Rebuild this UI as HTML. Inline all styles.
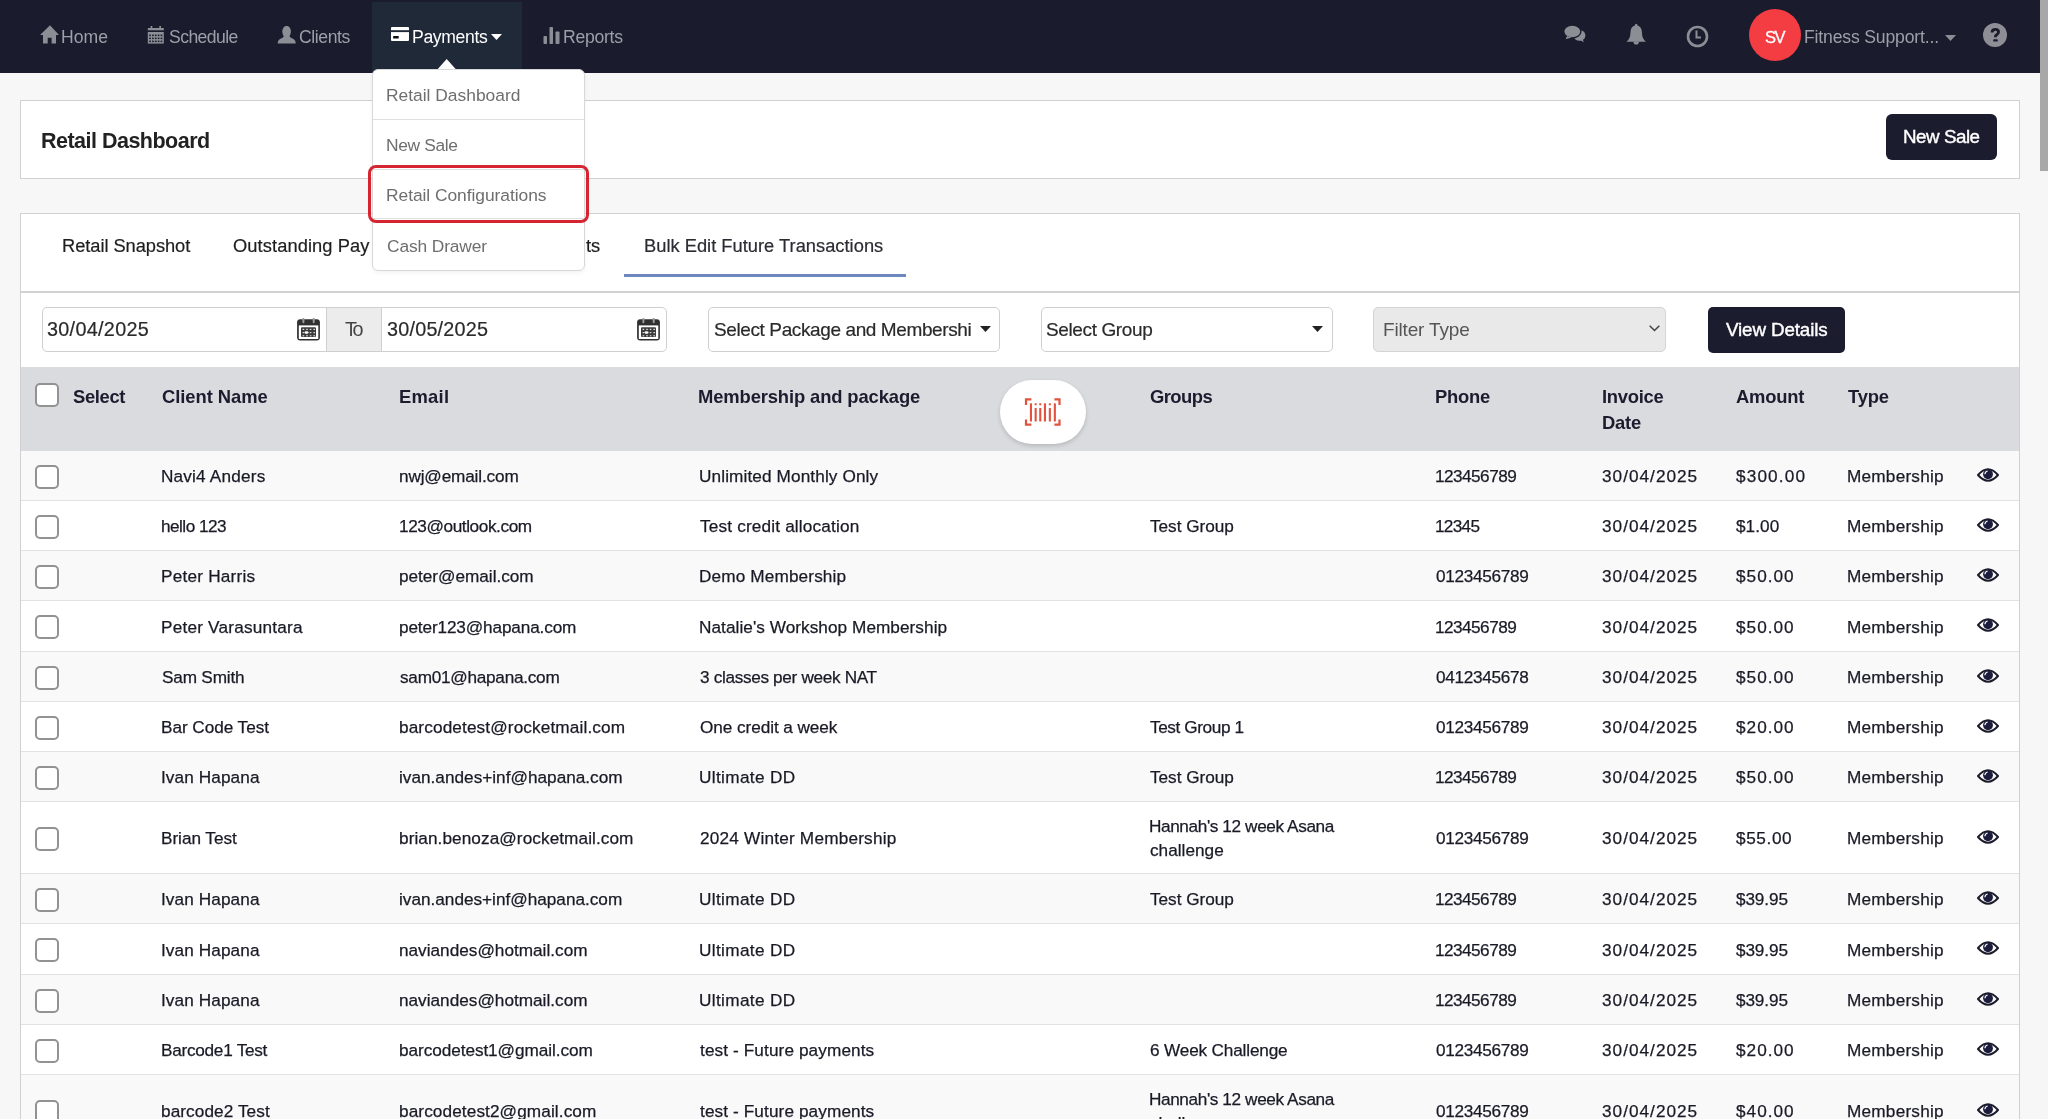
<!DOCTYPE html>
<html><head><meta charset="utf-8"><title>Retail Dashboard</title>
<style>
html,body{margin:0;padding:0;}
body{width:2048px;height:1119px;overflow:hidden;position:relative;background:#f7f7f7;font-family:"Liberation Sans",sans-serif;}
.b{position:absolute;}
.t{position:absolute;white-space:nowrap;line-height:1;will-change:transform;}
</style></head><body>
<div class="b" style="left:0px;top:0px;width:2040px;height:73px;background:#1a1b2c;"></div>
<div class="b" style="left:372px;top:2px;width:150px;height:71px;background:#1f2937;"></div>
<svg class="b" style="left:40px;top:25px" width="20" height="19" viewBox="0 0 20 19"><path d="M10 0.2 L19 9.9 L16 9.9 L16 18.5 L11.6 18.5 L11.6 12.7 L7.7 12.7 L7.7 18.5 L3 18.5 L3 9.9 L0 9.9 Z" fill="#8c8e95"/></svg>
<svg class="b" style="left:147px;top:26px" width="17" height="18" viewBox="0 0 17 18"><rect x="0.8" y="2" width="16" height="2.3" fill="#8c8e95"/><rect x="3.6" y="0" width="1.7" height="2.5" fill="#8c8e95"/><rect x="12.3" y="0" width="1.7" height="2.5" fill="#8c8e95"/><rect x="0.8" y="6" width="16" height="11.6" fill="#8c8e95"/><rect x="2.20" y="8.60" width="1.7" height="1.5" fill="#1a1b2c"/><rect x="5.05" y="8.60" width="1.7" height="1.5" fill="#1a1b2c"/><rect x="7.90" y="8.60" width="1.7" height="1.5" fill="#1a1b2c"/><rect x="10.75" y="8.60" width="1.7" height="1.5" fill="#1a1b2c"/><rect x="13.60" y="8.60" width="1.7" height="1.5" fill="#1a1b2c"/><rect x="2.20" y="11.60" width="1.7" height="1.5" fill="#1a1b2c"/><rect x="5.05" y="11.60" width="1.7" height="1.5" fill="#1a1b2c"/><rect x="7.90" y="11.60" width="1.7" height="1.5" fill="#1a1b2c"/><rect x="10.75" y="11.60" width="1.7" height="1.5" fill="#1a1b2c"/><rect x="13.60" y="11.60" width="1.7" height="1.5" fill="#1a1b2c"/><rect x="2.20" y="14.60" width="1.7" height="1.5" fill="#1a1b2c"/><rect x="5.05" y="14.60" width="1.7" height="1.5" fill="#1a1b2c"/><rect x="7.90" y="14.60" width="1.7" height="1.5" fill="#1a1b2c"/><rect x="10.75" y="14.60" width="1.7" height="1.5" fill="#1a1b2c"/><rect x="13.60" y="14.60" width="1.7" height="1.5" fill="#1a1b2c"/></svg>
<svg class="b" style="left:277px;top:26px" width="20" height="18" viewBox="0 0 20 18"><ellipse cx="9.6" cy="5.6" rx="4.3" ry="5.7" fill="#8c8e95"/><path d="M6.8 9.5 L12.4 9.5 Q12.6 11.2 14 11.7 L16.8 13.2 Q18.8 14.3 18.8 17.6 L0.6 17.6 Q0.6 14.3 2.6 13.2 L5.4 11.7 Q6.8 11.2 6.8 9.5 Z" fill="#8c8e95"/></svg>
<svg class="b" style="left:391px;top:27px" width="18" height="14" viewBox="0 0 18 14"><rect x="0" y="0" width="18" height="14" rx="1" fill="#fff"/><rect x="0" y="3.2" width="18" height="1.9" fill="#1f2937"/><rect x="2.1" y="9" width="5.6" height="2.5" rx="0.5" fill="#0b0f1a"/></svg>
<svg class="b" style="left:543px;top:27px" width="17" height="17" viewBox="0 0 17 17"><rect x="0.5" y="9" width="3.5" height="8" rx="0.8" fill="#8c8e95"/><rect x="6.5" y="0" width="3.5" height="17" rx="0.8" fill="#8c8e95"/><rect x="12.5" y="4.5" width="4" height="12.5" rx="0.8" fill="#8c8e95"/></svg>
<div class="t" style="left:61.00px;top:28.70px;font-size:17.6px;color:#9d9fa9;font-weight:400;letter-spacing:0.051px;">Home</div>
<div class="t" style="left:169.30px;top:28.70px;font-size:17.6px;color:#9d9fa9;font-weight:400;letter-spacing:-0.569px;">Schedule</div>
<div class="t" style="left:299.40px;top:28.70px;font-size:17.6px;color:#9d9fa9;font-weight:400;letter-spacing:-0.397px;">Clients</div>
<div class="t" style="left:412.30px;top:28.70px;font-size:17.6px;color:#ffffff;font-weight:400;letter-spacing:-0.347px;">Payments</div>
<svg class="b" style="left:491px;top:34px" width="11" height="6" viewBox="0 0 11 6"><path d="M0 0 L11 0 L5.5 6 Z" fill="#fff"/></svg>
<div class="t" style="left:562.90px;top:28.70px;font-size:17.6px;color:#9d9fa9;font-weight:400;letter-spacing:-0.268px;">Reports</div>
<svg class="b" style="left:1562px;top:23px" width="26" height="21" viewBox="0 0 26 21"><ellipse cx="17.5" cy="12.4" rx="5.9" ry="5.4" fill="#8c8e95"/><path d="M17 16.5 L21.8 19.3 L20.5 15.5 Z" fill="#8c8e95"/><ellipse cx="10.3" cy="8.5" rx="8.6" ry="6.4" fill="#8c8e95" stroke="#1a1b2c" stroke-width="1.4"/><path d="M5 13 L3.6 16.3 L9.5 14.5 Z" fill="#8c8e95"/></svg>
<svg class="b" style="left:1626px;top:23px" width="21" height="23" viewBox="0 0 21 23"><path d="M10.2 0.8 Q11.5 0.8 11.6 2.4 Q16 3.8 16 10 Q16 15.6 19.9 18.8 L0.5 18.8 Q4.4 15.6 4.4 10 Q4.4 3.8 8.8 2.4 Q8.9 0.8 10.2 0.8 Z" fill="#8c8e95"/><path d="M7.4 18.5 A2.8 3.1 0 0 0 13 18.5 Z" fill="#8c8e95"/></svg>
<svg class="b" style="left:1686px;top:25px" width="23" height="23" viewBox="0 0 23 23"><circle cx="11.5" cy="11.5" r="9.5" fill="none" stroke="#8c8e95" stroke-width="2.6"/><path d="M10.5 5.5 L10.5 12.5 L15 12.5" fill="none" stroke="#8c8e95" stroke-width="2"/></svg>
<div class="b" style="left:1749px;top:9px;width:52px;height:52px;border-radius:50%;background:#f43d42;"></div>
<div class="t" style="left:1764.50px;top:29.43px;font-size:16.5px;color:#ffffff;font-weight:400;letter-spacing:-1.405px;-webkit-text-stroke:0.3px #fff;">SV</div>
<div class="t" style="left:1804.00px;top:28.50px;font-size:17.6px;color:#9d9fa9;font-weight:400;letter-spacing:-0.164px;">Fitness Support...</div>
<svg class="b" style="left:1945px;top:35px" width="11" height="6" viewBox="0 0 11 6"><path d="M0 0 L11 0 L5.5 6 Z" fill="#8c8e95"/></svg>
<svg class="b" style="left:1982.5px;top:23.4px" width="24" height="24" viewBox="0 0 24 24"><circle cx="12" cy="12" r="12" fill="#8e8f96"/><path d="M9.1 9.4 Q9.1 6.4 12.4 6.4 Q15.5 6.4 15.5 9 Q15.5 10.9 13.4 12 Q12.4 12.6 12.4 14.2" fill="none" stroke="#1a1b2c" stroke-width="2.9"/><rect x="10.2" y="16.2" width="4.6" height="2.4" rx="0.9" fill="#1a1b2c"/></svg>
<div class="b" style="left:2040px;top:0px;width:8px;height:1119px;background:#f6f6f6;"></div>
<div class="b" style="left:2040px;top:0px;width:8px;height:171px;background:#a8a8a8;"></div>
<div class="b" style="left:20px;top:100px;width:2000px;height:79px;background:#fff;border:1px solid #d0d0d0;box-sizing:border-box;"></div>
<div class="t" style="left:41.30px;top:130.70px;font-size:21.5px;color:#222222;font-weight:700;letter-spacing:-0.512px;">Retail Dashboard</div>
<div class="b" style="left:1886px;top:114px;width:111px;height:46px;background:#1b1c2e;border-radius:6px;"></div>
<div class="t" style="left:1902.70px;top:128.19px;font-size:18.8px;color:#ffffff;font-weight:400;letter-spacing:-0.476px;-webkit-text-stroke:0.4px #fff;">New Sale</div>
<div class="b" style="left:20px;top:213px;width:2000px;height:987px;background:#fff;border:1px solid #d0d0d0;box-sizing:border-box;"></div>
<div class="t" style="left:61.50px;top:236.51px;font-size:18.3px;color:#1e1e1e;font-weight:400;letter-spacing:-0.056px;-webkit-text-stroke:0.2px currentColor;">Retail Snapshot</div>
<div class="t" style="left:233.40px;top:236.51px;font-size:18.3px;color:#1e1e1e;font-weight:400;letter-spacing:0.091px;-webkit-text-stroke:0.2px currentColor;">Outstanding Pay</div>
<div class="t" style="left:464.00px;top:236.51px;font-size:18.3px;color:#1e1e1e;font-weight:400;-webkit-text-stroke:0.2px currentColor;">Failed Payments</div>
<div class="t" style="left:643.80px;top:236.51px;font-size:18.3px;color:#2b2b33;font-weight:400;letter-spacing:0.015px;-webkit-text-stroke:0.2px currentColor;">Bulk Edit Future Transactions</div>
<div class="b" style="left:624px;top:274px;width:282px;height:3px;background:#6c88bd;"></div>
<div class="b" style="left:21px;top:291px;width:1998px;height:2px;background:#d2d2d2;"></div>
<div class="b" style="left:42px;top:307px;width:285px;height:45px;background:#fff;border:1px solid #cfcfcf;border-radius:5px 0 0 5px;box-sizing:border-box;"></div>
<div class="b" style="left:326px;top:307px;width:56px;height:45px;background:#ececec;border:1px solid #cfcfcf;box-sizing:border-box;"></div>
<div class="b" style="left:381px;top:307px;width:286px;height:45px;background:#fff;border:1px solid #cfcfcf;border-radius:0 5px 5px 0;box-sizing:border-box;"></div>
<div class="t" style="left:47.40px;top:319.74px;font-size:19.8px;color:#2a2a2a;font-weight:400;letter-spacing:0.311px;-webkit-text-stroke:0.2px currentColor;">30/04/2025</div>
<div class="t" style="left:345.00px;top:319.74px;font-size:19.8px;color:#444;font-weight:400;letter-spacing:-2.490px;">To</div>
<div class="t" style="left:387.40px;top:319.74px;font-size:19.8px;color:#2a2a2a;font-weight:400;letter-spacing:0.222px;-webkit-text-stroke:0.2px currentColor;">30/05/2025</div>
<svg class="b" style="left:297px;top:318px" width="24" height="24" viewBox="0 0 24 24"><rect x="0.1" y="1.3" width="22.8" height="21.3" rx="3" fill="#303030"/><rect x="1.8" y="7.4" width="19.5" height="13.6" fill="#fff"/><rect x="4" y="9.2" width="15" height="9.8" rx="1" fill="#3c3c3c"/><rect x="5.4" y="-0.1" width="2" height="5.3" rx="1" fill="#9a9a9a"/><rect x="15.7" y="-0.1" width="2" height="5.3" rx="1" fill="#9a9a9a"/><rect x="5.6" y="10.8" width="1.6" height="1.2" fill="#d8d8d8"/><rect x="9.2" y="10.8" width="1.6" height="1.2" fill="#d8d8d8"/><rect x="12.8" y="10.8" width="1.6" height="1.2" fill="#d8d8d8"/><rect x="16.4" y="10.8" width="1.6" height="1.2" fill="#d8d8d8"/><rect x="5.6" y="14.0" width="1.6" height="1.2" fill="#d8d8d8"/><rect x="9.2" y="14.0" width="1.6" height="1.2" fill="#d8d8d8"/><rect x="12.8" y="14.0" width="1.6" height="1.2" fill="#d8d8d8"/><rect x="16.4" y="14.0" width="1.6" height="1.2" fill="#d8d8d8"/><rect x="5.6" y="17.2" width="1.6" height="1.2" fill="#d8d8d8"/><rect x="9.2" y="17.2" width="1.6" height="1.2" fill="#d8d8d8"/><rect x="12.8" y="17.2" width="1.6" height="1.2" fill="#d8d8d8"/><rect x="16.4" y="17.2" width="1.6" height="1.2" fill="#d8d8d8"/><ellipse cx="9.5" cy="14.5" rx="2" ry="1.2" fill="#fff"/></svg>
<svg class="b" style="left:637px;top:318px" width="24" height="24" viewBox="0 0 24 24"><rect x="0.1" y="1.3" width="22.8" height="21.3" rx="3" fill="#303030"/><rect x="1.8" y="7.4" width="19.5" height="13.6" fill="#fff"/><rect x="4" y="9.2" width="15" height="9.8" rx="1" fill="#3c3c3c"/><rect x="5.4" y="-0.1" width="2" height="5.3" rx="1" fill="#9a9a9a"/><rect x="15.7" y="-0.1" width="2" height="5.3" rx="1" fill="#9a9a9a"/><rect x="5.6" y="10.8" width="1.6" height="1.2" fill="#d8d8d8"/><rect x="9.2" y="10.8" width="1.6" height="1.2" fill="#d8d8d8"/><rect x="12.8" y="10.8" width="1.6" height="1.2" fill="#d8d8d8"/><rect x="16.4" y="10.8" width="1.6" height="1.2" fill="#d8d8d8"/><rect x="5.6" y="14.0" width="1.6" height="1.2" fill="#d8d8d8"/><rect x="9.2" y="14.0" width="1.6" height="1.2" fill="#d8d8d8"/><rect x="12.8" y="14.0" width="1.6" height="1.2" fill="#d8d8d8"/><rect x="16.4" y="14.0" width="1.6" height="1.2" fill="#d8d8d8"/><rect x="5.6" y="17.2" width="1.6" height="1.2" fill="#d8d8d8"/><rect x="9.2" y="17.2" width="1.6" height="1.2" fill="#d8d8d8"/><rect x="12.8" y="17.2" width="1.6" height="1.2" fill="#d8d8d8"/><rect x="16.4" y="17.2" width="1.6" height="1.2" fill="#d8d8d8"/><ellipse cx="9.5" cy="14.5" rx="2" ry="1.2" fill="#fff"/></svg>
<div class="b" style="left:708px;top:307px;width:292px;height:45px;background:#fff;border:1px solid #cfcfcf;border-radius:5px;box-sizing:border-box;"></div>
<div class="t" style="left:713.50px;top:320.12px;font-size:19px;color:#2a2a2a;font-weight:400;letter-spacing:-0.390px;-webkit-text-stroke:0.2px currentColor;">Select Package and Membershi</div>
<svg class="b" style="left:980px;top:326px" width="11" height="6" viewBox="0 0 11 6"><path d="M0 0 L11 0 L5.5 6 Z" fill="#222"/></svg>
<div class="b" style="left:1041px;top:307px;width:292px;height:45px;background:#fff;border:1px solid #cfcfcf;border-radius:5px;box-sizing:border-box;"></div>
<div class="t" style="left:1045.80px;top:320.12px;font-size:19px;color:#2a2a2a;font-weight:400;letter-spacing:-0.375px;-webkit-text-stroke:0.2px currentColor;">Select Group</div>
<svg class="b" style="left:1312px;top:326px" width="11" height="6" viewBox="0 0 11 6"><path d="M0 0 L11 0 L5.5 6 Z" fill="#222"/></svg>
<div class="b" style="left:1373px;top:307px;width:293px;height:45px;background:#e9e9e9;border:1px solid #d4d4d4;border-radius:5px;box-sizing:border-box;"></div>
<div class="t" style="left:1383.40px;top:320.32px;font-size:19px;color:#555;font-weight:400;letter-spacing:-0.162px;">Filter Type</div>
<svg class="b" style="left:1649px;top:325px" width="11" height="7" viewBox="0 0 11 7"><path d="M0.7 0.7 L5.5 5.5 L10.3 0.7" fill="none" stroke="#444" stroke-width="1.5"/></svg>
<div class="b" style="left:1708px;top:307px;width:137px;height:46px;background:#1b1c2e;border-radius:5px;"></div>
<div class="t" style="left:1725.50px;top:321.09px;font-size:18.8px;color:#fff;font-weight:400;letter-spacing:-0.118px;-webkit-text-stroke:0.4px #fff;">View Details</div>
<div class="b" style="left:21px;top:367px;width:1998px;height:84px;background:#dadbdf;"></div>
<div class="b" style="left:35px;top:383px;width:24px;height:24px;border:2.5px solid #929292;border-radius:5px;box-sizing:border-box;background:#fff;"></div>
<div class="t" style="left:72.70px;top:388.12px;font-size:18.4px;color:#1b1c2e;font-weight:700;letter-spacing:-0.352px;">Select</div>
<div class="t" style="left:162.10px;top:388.12px;font-size:18.4px;color:#1b1c2e;font-weight:700;letter-spacing:-0.046px;">Client Name</div>
<div class="t" style="left:398.50px;top:388.12px;font-size:18.4px;color:#1b1c2e;font-weight:700;letter-spacing:0.236px;">Email</div>
<div class="t" style="left:698.10px;top:388.12px;font-size:18.4px;color:#1b1c2e;font-weight:700;letter-spacing:-0.125px;">Membership and package</div>
<div class="t" style="left:1150.30px;top:388.12px;font-size:18.4px;color:#1b1c2e;font-weight:700;letter-spacing:-0.553px;">Groups</div>
<div class="t" style="left:1435.00px;top:388.12px;font-size:18.4px;color:#1b1c2e;font-weight:700;letter-spacing:-0.267px;">Phone</div>
<div class="t" style="left:1601.50px;top:388.12px;font-size:18.4px;color:#1b1c2e;font-weight:700;letter-spacing:-0.290px;">Invoice</div>
<div class="t" style="left:1735.90px;top:388.12px;font-size:18.4px;color:#1b1c2e;font-weight:700;letter-spacing:-0.207px;">Amount</div>
<div class="t" style="left:1847.80px;top:388.12px;font-size:18.4px;color:#1b1c2e;font-weight:700;letter-spacing:-0.177px;">Type</div>
<div class="t" style="left:1601.50px;top:414.42px;font-size:18.4px;color:#1b1c2e;font-weight:700;letter-spacing:-0.200px;">Date</div>
<div class="b" style="left:1000px;top:380px;width:86px;height:64px;border-radius:32px;background:#fff;box-shadow:0 2px 4px rgba(0,0,0,0.16);"></div>
<svg class="b" style="left:1024px;top:398px" width="38" height="29" viewBox="0 0 38 29"><g fill="none" stroke="#e3523d" stroke-width="2.2"><path d="M7.4 1.3 L2 1.3 L2 7"/><path d="M30.4 1.3 L35.5 1.3 L35.5 7"/><path d="M2 21.5 L2 26.7 L7.4 26.7"/><path d="M35.5 21.5 L35.5 26.7 L30.4 26.7"/></g><g fill="#e3523d"><rect x="5.9" y="5.3" width="2.1" height="18.1" rx="0.5"/><rect x="10.6" y="5.3" width="2.1" height="2" rx="0.5"/><rect x="10.6" y="9.9" width="2.1" height="13.5" rx="0.5"/><rect x="15.2" y="5.3" width="2.1" height="2" rx="0.5"/><rect x="15.2" y="9.9" width="2.1" height="13.5" rx="0.5"/><rect x="19.9" y="5.3" width="2.1" height="18.1" rx="0.5"/><rect x="24.8" y="5.3" width="2.1" height="2" rx="0.5"/><rect x="24.8" y="9.9" width="2.1" height="13.5" rx="0.5"/><rect x="29.8" y="5.3" width="2.1" height="18.1" rx="0.5"/></g></svg>
<div class="b" style="left:21px;top:451px;width:1998px;height:49px;background:#f9f9f9;"></div>
<div class="b" style="left:21px;top:500px;width:1998px;height:1px;background:#e2e2e2;"></div>
<div class="b" style="left:35px;top:465px;width:24px;height:24px;border:2.5px solid #929292;border-radius:5px;box-sizing:border-box;background:#fff;"></div>
<div class="t" style="left:161.30px;top:468.14px;font-size:17.2px;color:#191a26;font-weight:400;letter-spacing:0.183px;-webkit-text-stroke:0.25px #191a26;">Navi4 Anders</div>
<div class="t" style="left:398.90px;top:468.14px;font-size:17.2px;color:#191a26;font-weight:400;letter-spacing:-0.153px;-webkit-text-stroke:0.25px #191a26;">nwj@email.com</div>
<div class="t" style="left:698.60px;top:468.14px;font-size:17.2px;color:#191a26;font-weight:400;letter-spacing:0.114px;-webkit-text-stroke:0.25px #191a26;">Unlimited Monthly Only</div>
<div class="t" style="left:1435.10px;top:468.14px;font-size:17.2px;color:#191a26;font-weight:400;letter-spacing:-0.534px;-webkit-text-stroke:0.25px #191a26;">123456789</div>
<div class="t" style="left:1602.20px;top:468.14px;font-size:17.2px;color:#191a26;font-weight:400;letter-spacing:1.015px;-webkit-text-stroke:0.25px #191a26;">30/04/2025</div>
<div class="t" style="left:1736.10px;top:468.14px;font-size:17.2px;color:#191a26;font-weight:400;letter-spacing:1.138px;-webkit-text-stroke:0.25px #191a26;">$300.00</div>
<div class="t" style="left:1846.80px;top:468.14px;font-size:17.2px;color:#191a26;font-weight:400;letter-spacing:0.222px;-webkit-text-stroke:0.25px #191a26;">Membership</div>
<svg class="b" style="left:1977px;top:467.9px" width="22" height="14" viewBox="0 0 22 14"><path d="M1 7 Q11 -4.6 21 7 Q11 18.6 1 7 Z" fill="none" stroke="#1b1b2b" stroke-width="2"/><circle cx="11" cy="6.3" r="4.9" fill="#1b1b3b"/><path d="M7.9 6.3 Q8.1 3.5 10.6 3" fill="none" stroke="#fff" stroke-width="1.1"/></svg>
<div class="b" style="left:21px;top:501px;width:1998px;height:49px;background:#ffffff;"></div>
<div class="b" style="left:21px;top:550px;width:1998px;height:1px;background:#e2e2e2;"></div>
<div class="b" style="left:35px;top:515px;width:24px;height:24px;border:2.5px solid #929292;border-radius:5px;box-sizing:border-box;background:#fff;"></div>
<div class="t" style="left:161.30px;top:518.14px;font-size:17.2px;color:#191a26;font-weight:400;letter-spacing:-0.526px;-webkit-text-stroke:0.25px #191a26;">hello 123</div>
<div class="t" style="left:398.90px;top:518.14px;font-size:17.2px;color:#191a26;font-weight:400;letter-spacing:-0.405px;-webkit-text-stroke:0.25px #191a26;">123@outlook.com</div>
<div class="t" style="left:699.60px;top:518.14px;font-size:17.2px;color:#191a26;font-weight:400;letter-spacing:0.169px;-webkit-text-stroke:0.25px #191a26;">Test credit allocation</div>
<div class="t" style="left:1435.10px;top:518.14px;font-size:17.2px;color:#191a26;font-weight:400;letter-spacing:-0.709px;-webkit-text-stroke:0.25px #191a26;">12345</div>
<div class="t" style="left:1602.20px;top:518.14px;font-size:17.2px;color:#191a26;font-weight:400;letter-spacing:1.015px;-webkit-text-stroke:0.25px #191a26;">30/04/2025</div>
<div class="t" style="left:1736.10px;top:518.14px;font-size:17.2px;color:#191a26;font-weight:400;letter-spacing:0.062px;-webkit-text-stroke:0.25px #191a26;">$1.00</div>
<div class="t" style="left:1846.80px;top:518.14px;font-size:17.2px;color:#191a26;font-weight:400;letter-spacing:0.222px;-webkit-text-stroke:0.25px #191a26;">Membership</div>
<div class="t" style="left:1150.40px;top:518.14px;font-size:17.2px;color:#191a26;font-weight:400;letter-spacing:-0.023px;-webkit-text-stroke:0.25px #191a26;">Test Group</div>
<svg class="b" style="left:1977px;top:517.9px" width="22" height="14" viewBox="0 0 22 14"><path d="M1 7 Q11 -4.6 21 7 Q11 18.6 1 7 Z" fill="none" stroke="#1b1b2b" stroke-width="2"/><circle cx="11" cy="6.3" r="4.9" fill="#1b1b3b"/><path d="M7.9 6.3 Q8.1 3.5 10.6 3" fill="none" stroke="#fff" stroke-width="1.1"/></svg>
<div class="b" style="left:21px;top:551px;width:1998px;height:49px;background:#f9f9f9;"></div>
<div class="b" style="left:21px;top:600px;width:1998px;height:1px;background:#e2e2e2;"></div>
<div class="b" style="left:35px;top:565px;width:24px;height:24px;border:2.5px solid #929292;border-radius:5px;box-sizing:border-box;background:#fff;"></div>
<div class="t" style="left:161.30px;top:568.14px;font-size:17.2px;color:#191a26;font-weight:400;letter-spacing:0.219px;-webkit-text-stroke:0.25px #191a26;">Peter Harris</div>
<div class="t" style="left:398.90px;top:568.14px;font-size:17.2px;color:#191a26;font-weight:400;letter-spacing:-0.023px;-webkit-text-stroke:0.25px #191a26;">peter@email.com</div>
<div class="t" style="left:698.60px;top:568.14px;font-size:17.2px;color:#191a26;font-weight:400;letter-spacing:0.134px;-webkit-text-stroke:0.25px #191a26;">Demo Membership</div>
<div class="t" style="left:1436.10px;top:568.14px;font-size:17.2px;color:#191a26;font-weight:400;letter-spacing:-0.314px;-webkit-text-stroke:0.25px #191a26;">0123456789</div>
<div class="t" style="left:1602.20px;top:568.14px;font-size:17.2px;color:#191a26;font-weight:400;letter-spacing:1.015px;-webkit-text-stroke:0.25px #191a26;">30/04/2025</div>
<div class="t" style="left:1736.10px;top:568.14px;font-size:17.2px;color:#191a26;font-weight:400;letter-spacing:1.018px;-webkit-text-stroke:0.25px #191a26;">$50.00</div>
<div class="t" style="left:1846.80px;top:568.14px;font-size:17.2px;color:#191a26;font-weight:400;letter-spacing:0.222px;-webkit-text-stroke:0.25px #191a26;">Membership</div>
<svg class="b" style="left:1977px;top:567.9px" width="22" height="14" viewBox="0 0 22 14"><path d="M1 7 Q11 -4.6 21 7 Q11 18.6 1 7 Z" fill="none" stroke="#1b1b2b" stroke-width="2"/><circle cx="11" cy="6.3" r="4.9" fill="#1b1b3b"/><path d="M7.9 6.3 Q8.1 3.5 10.6 3" fill="none" stroke="#fff" stroke-width="1.1"/></svg>
<div class="b" style="left:21px;top:601px;width:1998px;height:50px;background:#ffffff;"></div>
<div class="b" style="left:21px;top:651px;width:1998px;height:1px;background:#e2e2e2;"></div>
<div class="b" style="left:35px;top:615px;width:24px;height:24px;border:2.5px solid #929292;border-radius:5px;box-sizing:border-box;background:#fff;"></div>
<div class="t" style="left:161.30px;top:618.64px;font-size:17.2px;color:#191a26;font-weight:400;letter-spacing:0.209px;-webkit-text-stroke:0.25px #191a26;">Peter Varasuntara</div>
<div class="t" style="left:398.90px;top:618.64px;font-size:17.2px;color:#191a26;font-weight:400;letter-spacing:-0.138px;-webkit-text-stroke:0.25px #191a26;">peter123@hapana.com</div>
<div class="t" style="left:698.60px;top:618.64px;font-size:17.2px;color:#191a26;font-weight:400;letter-spacing:0.054px;-webkit-text-stroke:0.25px #191a26;">Natalie's Workshop Membership</div>
<div class="t" style="left:1435.10px;top:618.64px;font-size:17.2px;color:#191a26;font-weight:400;letter-spacing:-0.534px;-webkit-text-stroke:0.25px #191a26;">123456789</div>
<div class="t" style="left:1602.20px;top:618.64px;font-size:17.2px;color:#191a26;font-weight:400;letter-spacing:1.015px;-webkit-text-stroke:0.25px #191a26;">30/04/2025</div>
<div class="t" style="left:1736.10px;top:618.64px;font-size:17.2px;color:#191a26;font-weight:400;letter-spacing:1.018px;-webkit-text-stroke:0.25px #191a26;">$50.00</div>
<div class="t" style="left:1846.80px;top:618.64px;font-size:17.2px;color:#191a26;font-weight:400;letter-spacing:0.222px;-webkit-text-stroke:0.25px #191a26;">Membership</div>
<svg class="b" style="left:1977px;top:618.4px" width="22" height="14" viewBox="0 0 22 14"><path d="M1 7 Q11 -4.6 21 7 Q11 18.6 1 7 Z" fill="none" stroke="#1b1b2b" stroke-width="2"/><circle cx="11" cy="6.3" r="4.9" fill="#1b1b3b"/><path d="M7.9 6.3 Q8.1 3.5 10.6 3" fill="none" stroke="#fff" stroke-width="1.1"/></svg>
<div class="b" style="left:21px;top:652px;width:1998px;height:49px;background:#f9f9f9;"></div>
<div class="b" style="left:21px;top:701px;width:1998px;height:1px;background:#e2e2e2;"></div>
<div class="b" style="left:35px;top:666px;width:24px;height:24px;border:2.5px solid #929292;border-radius:5px;box-sizing:border-box;background:#fff;"></div>
<div class="t" style="left:162.30px;top:669.14px;font-size:17.2px;color:#191a26;font-weight:400;letter-spacing:-0.186px;-webkit-text-stroke:0.25px #191a26;">Sam Smith</div>
<div class="t" style="left:399.90px;top:669.14px;font-size:17.2px;color:#191a26;font-weight:400;letter-spacing:-0.261px;-webkit-text-stroke:0.25px #191a26;">sam01@hapana.com</div>
<div class="t" style="left:699.60px;top:669.14px;font-size:17.2px;color:#191a26;font-weight:400;letter-spacing:-0.330px;-webkit-text-stroke:0.25px #191a26;">3 classes per week NAT</div>
<div class="t" style="left:1436.10px;top:669.14px;font-size:17.2px;color:#191a26;font-weight:400;letter-spacing:-0.314px;-webkit-text-stroke:0.25px #191a26;">0412345678</div>
<div class="t" style="left:1602.20px;top:669.14px;font-size:17.2px;color:#191a26;font-weight:400;letter-spacing:1.015px;-webkit-text-stroke:0.25px #191a26;">30/04/2025</div>
<div class="t" style="left:1736.10px;top:669.14px;font-size:17.2px;color:#191a26;font-weight:400;letter-spacing:1.018px;-webkit-text-stroke:0.25px #191a26;">$50.00</div>
<div class="t" style="left:1846.80px;top:669.14px;font-size:17.2px;color:#191a26;font-weight:400;letter-spacing:0.222px;-webkit-text-stroke:0.25px #191a26;">Membership</div>
<svg class="b" style="left:1977px;top:668.9px" width="22" height="14" viewBox="0 0 22 14"><path d="M1 7 Q11 -4.6 21 7 Q11 18.6 1 7 Z" fill="none" stroke="#1b1b2b" stroke-width="2"/><circle cx="11" cy="6.3" r="4.9" fill="#1b1b3b"/><path d="M7.9 6.3 Q8.1 3.5 10.6 3" fill="none" stroke="#fff" stroke-width="1.1"/></svg>
<div class="b" style="left:21px;top:702px;width:1998px;height:49px;background:#ffffff;"></div>
<div class="b" style="left:21px;top:751px;width:1998px;height:1px;background:#e2e2e2;"></div>
<div class="b" style="left:35px;top:716px;width:24px;height:24px;border:2.5px solid #929292;border-radius:5px;box-sizing:border-box;background:#fff;"></div>
<div class="t" style="left:161.30px;top:719.14px;font-size:17.2px;color:#191a26;font-weight:400;letter-spacing:-0.053px;-webkit-text-stroke:0.25px #191a26;">Bar Code Test</div>
<div class="t" style="left:398.90px;top:719.14px;font-size:17.2px;color:#191a26;font-weight:400;letter-spacing:0.128px;-webkit-text-stroke:0.25px #191a26;">barcodetest@rocketmail.com</div>
<div class="t" style="left:699.60px;top:719.14px;font-size:17.2px;color:#191a26;font-weight:400;letter-spacing:-0.071px;-webkit-text-stroke:0.25px #191a26;">One credit a week</div>
<div class="t" style="left:1436.10px;top:719.14px;font-size:17.2px;color:#191a26;font-weight:400;letter-spacing:-0.314px;-webkit-text-stroke:0.25px #191a26;">0123456789</div>
<div class="t" style="left:1602.20px;top:719.14px;font-size:17.2px;color:#191a26;font-weight:400;letter-spacing:1.015px;-webkit-text-stroke:0.25px #191a26;">30/04/2025</div>
<div class="t" style="left:1736.10px;top:719.14px;font-size:17.2px;color:#191a26;font-weight:400;letter-spacing:1.018px;-webkit-text-stroke:0.25px #191a26;">$20.00</div>
<div class="t" style="left:1846.80px;top:719.14px;font-size:17.2px;color:#191a26;font-weight:400;letter-spacing:0.222px;-webkit-text-stroke:0.25px #191a26;">Membership</div>
<div class="t" style="left:1150.40px;top:719.14px;font-size:17.2px;color:#191a26;font-weight:400;letter-spacing:-0.395px;-webkit-text-stroke:0.25px #191a26;">Test Group 1</div>
<svg class="b" style="left:1977px;top:718.9px" width="22" height="14" viewBox="0 0 22 14"><path d="M1 7 Q11 -4.6 21 7 Q11 18.6 1 7 Z" fill="none" stroke="#1b1b2b" stroke-width="2"/><circle cx="11" cy="6.3" r="4.9" fill="#1b1b3b"/><path d="M7.9 6.3 Q8.1 3.5 10.6 3" fill="none" stroke="#fff" stroke-width="1.1"/></svg>
<div class="b" style="left:21px;top:752px;width:1998px;height:49px;background:#f9f9f9;"></div>
<div class="b" style="left:21px;top:801px;width:1998px;height:1px;background:#e2e2e2;"></div>
<div class="b" style="left:35px;top:766px;width:24px;height:24px;border:2.5px solid #929292;border-radius:5px;box-sizing:border-box;background:#fff;"></div>
<div class="t" style="left:161.30px;top:769.14px;font-size:17.2px;color:#191a26;font-weight:400;letter-spacing:0.099px;-webkit-text-stroke:0.25px #191a26;">Ivan Hapana</div>
<div class="t" style="left:398.90px;top:769.14px;font-size:17.2px;color:#191a26;font-weight:400;letter-spacing:0.010px;-webkit-text-stroke:0.25px #191a26;">ivan.andes+inf@hapana.com</div>
<div class="t" style="left:698.60px;top:769.14px;font-size:17.2px;color:#191a26;font-weight:400;letter-spacing:0.348px;-webkit-text-stroke:0.25px #191a26;">Ultimate DD</div>
<div class="t" style="left:1435.10px;top:769.14px;font-size:17.2px;color:#191a26;font-weight:400;letter-spacing:-0.534px;-webkit-text-stroke:0.25px #191a26;">123456789</div>
<div class="t" style="left:1602.20px;top:769.14px;font-size:17.2px;color:#191a26;font-weight:400;letter-spacing:1.015px;-webkit-text-stroke:0.25px #191a26;">30/04/2025</div>
<div class="t" style="left:1736.10px;top:769.14px;font-size:17.2px;color:#191a26;font-weight:400;letter-spacing:1.018px;-webkit-text-stroke:0.25px #191a26;">$50.00</div>
<div class="t" style="left:1846.80px;top:769.14px;font-size:17.2px;color:#191a26;font-weight:400;letter-spacing:0.222px;-webkit-text-stroke:0.25px #191a26;">Membership</div>
<div class="t" style="left:1150.40px;top:769.14px;font-size:17.2px;color:#191a26;font-weight:400;letter-spacing:-0.023px;-webkit-text-stroke:0.25px #191a26;">Test Group</div>
<svg class="b" style="left:1977px;top:768.9px" width="22" height="14" viewBox="0 0 22 14"><path d="M1 7 Q11 -4.6 21 7 Q11 18.6 1 7 Z" fill="none" stroke="#1b1b2b" stroke-width="2"/><circle cx="11" cy="6.3" r="4.9" fill="#1b1b3b"/><path d="M7.9 6.3 Q8.1 3.5 10.6 3" fill="none" stroke="#fff" stroke-width="1.1"/></svg>
<div class="b" style="left:21px;top:802px;width:1998px;height:71px;background:#ffffff;"></div>
<div class="b" style="left:21px;top:873px;width:1998px;height:1px;background:#e2e2e2;"></div>
<div class="b" style="left:35px;top:827px;width:24px;height:24px;border:2.5px solid #929292;border-radius:5px;box-sizing:border-box;background:#fff;"></div>
<div class="t" style="left:161.30px;top:830.14px;font-size:17.2px;color:#191a26;font-weight:400;letter-spacing:-0.038px;-webkit-text-stroke:0.25px #191a26;">Brian Test</div>
<div class="t" style="left:398.90px;top:830.14px;font-size:17.2px;color:#191a26;font-weight:400;letter-spacing:0.078px;-webkit-text-stroke:0.25px #191a26;">brian.benoza@rocketmail.com</div>
<div class="t" style="left:699.60px;top:830.14px;font-size:17.2px;color:#191a26;font-weight:400;letter-spacing:0.202px;-webkit-text-stroke:0.25px #191a26;">2024 Winter Membership</div>
<div class="t" style="left:1436.10px;top:830.14px;font-size:17.2px;color:#191a26;font-weight:400;letter-spacing:-0.314px;-webkit-text-stroke:0.25px #191a26;">0123456789</div>
<div class="t" style="left:1602.20px;top:830.14px;font-size:17.2px;color:#191a26;font-weight:400;letter-spacing:1.015px;-webkit-text-stroke:0.25px #191a26;">30/04/2025</div>
<div class="t" style="left:1736.10px;top:830.14px;font-size:17.2px;color:#191a26;font-weight:400;letter-spacing:0.618px;-webkit-text-stroke:0.25px #191a26;">$55.00</div>
<div class="t" style="left:1846.80px;top:830.14px;font-size:17.2px;color:#191a26;font-weight:400;letter-spacing:0.222px;-webkit-text-stroke:0.25px #191a26;">Membership</div>
<div class="t" style="left:1149.40px;top:817.94px;font-size:17.2px;color:#191a26;font-weight:400;letter-spacing:-0.387px;-webkit-text-stroke:0.25px #191a26;">Hannah's 12 week Asana</div>
<div class="t" style="left:1150.40px;top:842.44px;font-size:17.2px;color:#191a26;font-weight:400;letter-spacing:0.022px;-webkit-text-stroke:0.25px #191a26;">challenge</div>
<svg class="b" style="left:1977px;top:829.9px" width="22" height="14" viewBox="0 0 22 14"><path d="M1 7 Q11 -4.6 21 7 Q11 18.6 1 7 Z" fill="none" stroke="#1b1b2b" stroke-width="2"/><circle cx="11" cy="6.3" r="4.9" fill="#1b1b3b"/><path d="M7.9 6.3 Q8.1 3.5 10.6 3" fill="none" stroke="#fff" stroke-width="1.1"/></svg>
<div class="b" style="left:21px;top:874px;width:1998px;height:49px;background:#f9f9f9;"></div>
<div class="b" style="left:21px;top:923px;width:1998px;height:1px;background:#e2e2e2;"></div>
<div class="b" style="left:35px;top:888px;width:24px;height:24px;border:2.5px solid #929292;border-radius:5px;box-sizing:border-box;background:#fff;"></div>
<div class="t" style="left:161.30px;top:891.14px;font-size:17.2px;color:#191a26;font-weight:400;letter-spacing:0.099px;-webkit-text-stroke:0.25px #191a26;">Ivan Hapana</div>
<div class="t" style="left:398.90px;top:891.14px;font-size:17.2px;color:#191a26;font-weight:400;letter-spacing:-0.006px;-webkit-text-stroke:0.25px #191a26;">ivan.andes+inf@hapana.com</div>
<div class="t" style="left:698.60px;top:891.14px;font-size:17.2px;color:#191a26;font-weight:400;letter-spacing:0.358px;-webkit-text-stroke:0.25px #191a26;">Ultimate DD</div>
<div class="t" style="left:1435.10px;top:891.14px;font-size:17.2px;color:#191a26;font-weight:400;letter-spacing:-0.534px;-webkit-text-stroke:0.25px #191a26;">123456789</div>
<div class="t" style="left:1602.20px;top:891.14px;font-size:17.2px;color:#191a26;font-weight:400;letter-spacing:1.015px;-webkit-text-stroke:0.25px #191a26;">30/04/2025</div>
<div class="t" style="left:1736.10px;top:891.14px;font-size:17.2px;color:#191a26;font-weight:400;letter-spacing:-0.122px;-webkit-text-stroke:0.25px #191a26;">$39.95</div>
<div class="t" style="left:1846.80px;top:891.14px;font-size:17.2px;color:#191a26;font-weight:400;letter-spacing:0.222px;-webkit-text-stroke:0.25px #191a26;">Membership</div>
<div class="t" style="left:1150.40px;top:891.14px;font-size:17.2px;color:#191a26;font-weight:400;letter-spacing:-0.023px;-webkit-text-stroke:0.25px #191a26;">Test Group</div>
<svg class="b" style="left:1977px;top:890.9px" width="22" height="14" viewBox="0 0 22 14"><path d="M1 7 Q11 -4.6 21 7 Q11 18.6 1 7 Z" fill="none" stroke="#1b1b2b" stroke-width="2"/><circle cx="11" cy="6.3" r="4.9" fill="#1b1b3b"/><path d="M7.9 6.3 Q8.1 3.5 10.6 3" fill="none" stroke="#fff" stroke-width="1.1"/></svg>
<div class="b" style="left:21px;top:924px;width:1998px;height:50px;background:#ffffff;"></div>
<div class="b" style="left:21px;top:974px;width:1998px;height:1px;background:#e2e2e2;"></div>
<div class="b" style="left:35px;top:938px;width:24px;height:24px;border:2.5px solid #929292;border-radius:5px;box-sizing:border-box;background:#fff;"></div>
<div class="t" style="left:161.30px;top:941.64px;font-size:17.2px;color:#191a26;font-weight:400;letter-spacing:0.099px;-webkit-text-stroke:0.25px #191a26;">Ivan Hapana</div>
<div class="t" style="left:398.90px;top:941.64px;font-size:17.2px;color:#191a26;font-weight:400;letter-spacing:0.003px;-webkit-text-stroke:0.25px #191a26;">naviandes@hotmail.com</div>
<div class="t" style="left:698.60px;top:941.64px;font-size:17.2px;color:#191a26;font-weight:400;letter-spacing:0.358px;-webkit-text-stroke:0.25px #191a26;">Ultimate DD</div>
<div class="t" style="left:1435.10px;top:941.64px;font-size:17.2px;color:#191a26;font-weight:400;letter-spacing:-0.534px;-webkit-text-stroke:0.25px #191a26;">123456789</div>
<div class="t" style="left:1602.20px;top:941.64px;font-size:17.2px;color:#191a26;font-weight:400;letter-spacing:1.015px;-webkit-text-stroke:0.25px #191a26;">30/04/2025</div>
<div class="t" style="left:1736.10px;top:941.64px;font-size:17.2px;color:#191a26;font-weight:400;letter-spacing:-0.122px;-webkit-text-stroke:0.25px #191a26;">$39.95</div>
<div class="t" style="left:1846.80px;top:941.64px;font-size:17.2px;color:#191a26;font-weight:400;letter-spacing:0.222px;-webkit-text-stroke:0.25px #191a26;">Membership</div>
<svg class="b" style="left:1977px;top:941.4px" width="22" height="14" viewBox="0 0 22 14"><path d="M1 7 Q11 -4.6 21 7 Q11 18.6 1 7 Z" fill="none" stroke="#1b1b2b" stroke-width="2"/><circle cx="11" cy="6.3" r="4.9" fill="#1b1b3b"/><path d="M7.9 6.3 Q8.1 3.5 10.6 3" fill="none" stroke="#fff" stroke-width="1.1"/></svg>
<div class="b" style="left:21px;top:975px;width:1998px;height:49px;background:#f9f9f9;"></div>
<div class="b" style="left:21px;top:1024px;width:1998px;height:1px;background:#e2e2e2;"></div>
<div class="b" style="left:35px;top:989px;width:24px;height:24px;border:2.5px solid #929292;border-radius:5px;box-sizing:border-box;background:#fff;"></div>
<div class="t" style="left:161.30px;top:992.14px;font-size:17.2px;color:#191a26;font-weight:400;letter-spacing:0.099px;-webkit-text-stroke:0.25px #191a26;">Ivan Hapana</div>
<div class="t" style="left:398.90px;top:992.14px;font-size:17.2px;color:#191a26;font-weight:400;letter-spacing:0.003px;-webkit-text-stroke:0.25px #191a26;">naviandes@hotmail.com</div>
<div class="t" style="left:698.60px;top:992.14px;font-size:17.2px;color:#191a26;font-weight:400;letter-spacing:0.358px;-webkit-text-stroke:0.25px #191a26;">Ultimate DD</div>
<div class="t" style="left:1435.10px;top:992.14px;font-size:17.2px;color:#191a26;font-weight:400;letter-spacing:-0.534px;-webkit-text-stroke:0.25px #191a26;">123456789</div>
<div class="t" style="left:1602.20px;top:992.14px;font-size:17.2px;color:#191a26;font-weight:400;letter-spacing:1.015px;-webkit-text-stroke:0.25px #191a26;">30/04/2025</div>
<div class="t" style="left:1736.10px;top:992.14px;font-size:17.2px;color:#191a26;font-weight:400;letter-spacing:-0.122px;-webkit-text-stroke:0.25px #191a26;">$39.95</div>
<div class="t" style="left:1846.80px;top:992.14px;font-size:17.2px;color:#191a26;font-weight:400;letter-spacing:0.222px;-webkit-text-stroke:0.25px #191a26;">Membership</div>
<svg class="b" style="left:1977px;top:991.9px" width="22" height="14" viewBox="0 0 22 14"><path d="M1 7 Q11 -4.6 21 7 Q11 18.6 1 7 Z" fill="none" stroke="#1b1b2b" stroke-width="2"/><circle cx="11" cy="6.3" r="4.9" fill="#1b1b3b"/><path d="M7.9 6.3 Q8.1 3.5 10.6 3" fill="none" stroke="#fff" stroke-width="1.1"/></svg>
<div class="b" style="left:21px;top:1025px;width:1998px;height:49px;background:#ffffff;"></div>
<div class="b" style="left:21px;top:1074px;width:1998px;height:1px;background:#e2e2e2;"></div>
<div class="b" style="left:35px;top:1039px;width:24px;height:24px;border:2.5px solid #929292;border-radius:5px;box-sizing:border-box;background:#fff;"></div>
<div class="t" style="left:161.30px;top:1042.14px;font-size:17.2px;color:#191a26;font-weight:400;letter-spacing:-0.266px;-webkit-text-stroke:0.25px #191a26;">Barcode1 Test</div>
<div class="t" style="left:398.90px;top:1042.14px;font-size:17.2px;color:#191a26;font-weight:400;letter-spacing:-0.063px;-webkit-text-stroke:0.25px #191a26;">barcodetest1@gmail.com</div>
<div class="t" style="left:699.60px;top:1042.14px;font-size:17.2px;color:#191a26;font-weight:400;letter-spacing:0.107px;-webkit-text-stroke:0.25px #191a26;">test - Future payments</div>
<div class="t" style="left:1436.10px;top:1042.14px;font-size:17.2px;color:#191a26;font-weight:400;letter-spacing:-0.314px;-webkit-text-stroke:0.25px #191a26;">0123456789</div>
<div class="t" style="left:1602.20px;top:1042.14px;font-size:17.2px;color:#191a26;font-weight:400;letter-spacing:1.015px;-webkit-text-stroke:0.25px #191a26;">30/04/2025</div>
<div class="t" style="left:1736.10px;top:1042.14px;font-size:17.2px;color:#191a26;font-weight:400;letter-spacing:1.018px;-webkit-text-stroke:0.25px #191a26;">$20.00</div>
<div class="t" style="left:1846.80px;top:1042.14px;font-size:17.2px;color:#191a26;font-weight:400;letter-spacing:0.222px;-webkit-text-stroke:0.25px #191a26;">Membership</div>
<div class="t" style="left:1150.40px;top:1042.14px;font-size:17.2px;color:#191a26;font-weight:400;letter-spacing:-0.165px;-webkit-text-stroke:0.25px #191a26;">6 Week Challenge</div>
<svg class="b" style="left:1977px;top:1041.9px" width="22" height="14" viewBox="0 0 22 14"><path d="M1 7 Q11 -4.6 21 7 Q11 18.6 1 7 Z" fill="none" stroke="#1b1b2b" stroke-width="2"/><circle cx="11" cy="6.3" r="4.9" fill="#1b1b3b"/><path d="M7.9 6.3 Q8.1 3.5 10.6 3" fill="none" stroke="#fff" stroke-width="1.1"/></svg>
<div class="b" style="left:21px;top:1075px;width:1998px;height:71px;background:#f9f9f9;"></div>
<div class="b" style="left:21px;top:1146px;width:1998px;height:1px;background:#e2e2e2;"></div>
<div class="b" style="left:35px;top:1100px;width:24px;height:24px;border:2.5px solid #929292;border-radius:5px;box-sizing:border-box;background:#fff;"></div>
<div class="t" style="left:161.30px;top:1103.14px;font-size:17.2px;color:#191a26;font-weight:400;letter-spacing:0.084px;-webkit-text-stroke:0.25px #191a26;">barcode2 Test</div>
<div class="t" style="left:398.90px;top:1103.14px;font-size:17.2px;color:#191a26;font-weight:400;letter-spacing:0.104px;-webkit-text-stroke:0.25px #191a26;">barcodetest2@gmail.com</div>
<div class="t" style="left:699.60px;top:1103.14px;font-size:17.2px;color:#191a26;font-weight:400;letter-spacing:0.107px;-webkit-text-stroke:0.25px #191a26;">test - Future payments</div>
<div class="t" style="left:1436.10px;top:1103.14px;font-size:17.2px;color:#191a26;font-weight:400;letter-spacing:-0.314px;-webkit-text-stroke:0.25px #191a26;">0123456789</div>
<div class="t" style="left:1602.20px;top:1103.14px;font-size:17.2px;color:#191a26;font-weight:400;letter-spacing:1.015px;-webkit-text-stroke:0.25px #191a26;">30/04/2025</div>
<div class="t" style="left:1736.10px;top:1103.14px;font-size:17.2px;color:#191a26;font-weight:400;letter-spacing:1.018px;-webkit-text-stroke:0.25px #191a26;">$40.00</div>
<div class="t" style="left:1846.80px;top:1103.14px;font-size:17.2px;color:#191a26;font-weight:400;letter-spacing:0.222px;-webkit-text-stroke:0.25px #191a26;">Membership</div>
<div class="t" style="left:1149.40px;top:1090.94px;font-size:17.2px;color:#191a26;font-weight:400;letter-spacing:-0.387px;-webkit-text-stroke:0.25px #191a26;">Hannah's 12 week Asana</div>
<div class="t" style="left:1150.40px;top:1115.44px;font-size:17.2px;color:#191a26;font-weight:400;letter-spacing:0.022px;-webkit-text-stroke:0.25px #191a26;">challenge</div>
<svg class="b" style="left:1977px;top:1102.9px" width="22" height="14" viewBox="0 0 22 14"><path d="M1 7 Q11 -4.6 21 7 Q11 18.6 1 7 Z" fill="none" stroke="#1b1b2b" stroke-width="2"/><circle cx="11" cy="6.3" r="4.9" fill="#1b1b3b"/><path d="M7.9 6.3 Q8.1 3.5 10.6 3" fill="none" stroke="#fff" stroke-width="1.1"/></svg>
<svg class="b" style="left:435.8px;top:58.6px" width="22" height="12" viewBox="0 0 22 12"><path d="M0 12 L10.7 0 L21.4 12 Z" fill="#fff"/></svg>
<div class="b" style="left:372px;top:69px;width:213px;height:202px;background:#fff;border:1px solid #d8d8d8;border-radius:6px;box-sizing:border-box;box-shadow:0 2px 4px rgba(0,0,0,0.05);"></div>
<div class="b" style="left:373px;top:119px;width:211px;height:1px;background:#e0e0e0;"></div>
<div class="b" style="left:373px;top:169px;width:211px;height:1px;background:#e0e0e0;"></div>
<div class="b" style="left:373px;top:218px;width:211px;height:1px;background:#e0e0e0;"></div>
<div class="t" style="left:385.50px;top:87.37px;font-size:17.4px;color:#6e6e6e;font-weight:400;letter-spacing:0.000px;">Retail Dashboard</div>
<div class="t" style="left:385.50px;top:137.07px;font-size:17.4px;color:#6e6e6e;font-weight:400;letter-spacing:-0.365px;">New Sale</div>
<div class="t" style="left:385.50px;top:186.77px;font-size:17.4px;color:#6e6e6e;font-weight:400;letter-spacing:-0.047px;">Retail Configurations</div>
<div class="t" style="left:386.50px;top:238.47px;font-size:17.4px;color:#6e6e6e;font-weight:400;letter-spacing:-0.138px;">Cash Drawer</div>
<div class="b" style="left:367.5px;top:165px;width:221px;height:57.5px;border:3px solid #d42530;border-radius:8px;box-sizing:border-box;"></div>
</body></html>
